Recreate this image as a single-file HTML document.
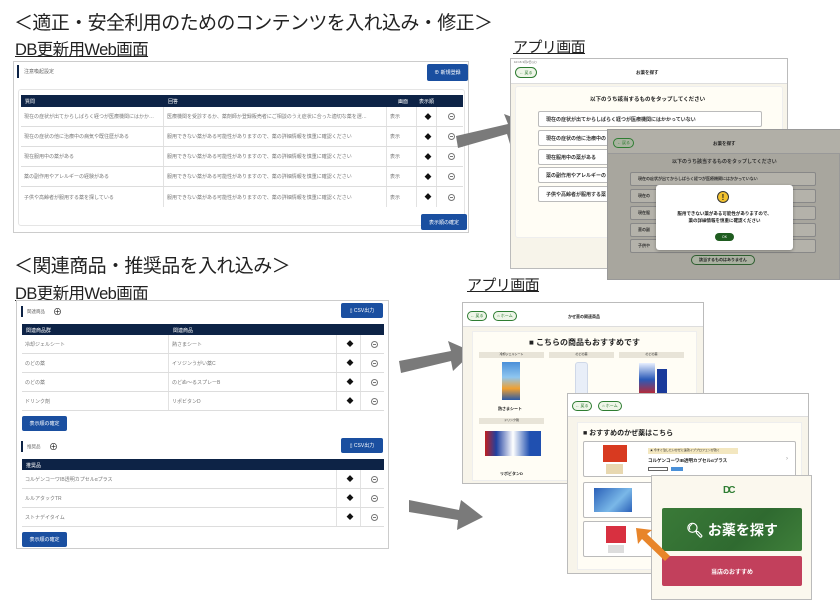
<!DOCTYPE html>
<html><head><meta charset="utf-8">
<style>
*{box-sizing:border-box;margin:0;padding:0}
body{width:840px;height:596px;background:#fff;position:relative;overflow:hidden;font-family:"Liberation Sans","Noto Sans CJK JP",sans-serif;color:#222}
.a{position:absolute}
.h1{font-size:19px;white-space:nowrap;letter-spacing:-0.6px}
.h2{font-size:16.5px;text-decoration:underline;white-space:nowrap;letter-spacing:-0.6px}
.panel{border:1px solid #ccc;background:#fff}
.btn{background:#1a4fa0;color:#fff;font-size:5px;border-radius:2px;display:flex;align-items:center;justify-content:center}
.thd{background:#0d2346;color:#fff;font-size:5px}
.row{border-bottom:1px solid #ddd;font-size:5px;color:#777}
.cell{position:absolute;top:0;height:100%;display:flex;align-items:center;padding-left:3px;border-right:1px solid #e2e2e2}
.sort{font-size:7px;color:#111}
.minus{width:7px;height:7px;border:1px solid #777;border-radius:50%;position:relative}
.minus:after{content:"";position:absolute;left:1px;right:1px;top:2px;height:1px;background:#777}
.app{background:#f7f4ea;border:1px solid #bbb}
.bar{background:#fff;border-bottom:1px solid #ddd}
.back{border:1px solid #2e7d32;border-radius:6px;background:#eef5e8;color:#2e7d32;font-size:4px;display:flex;align-items:center;justify-content:center}
.opt{background:#fff;border:1px solid #bbb;border-radius:2px;font-size:5px;font-weight:bold;color:#333;display:flex;align-items:center;padding-left:7px}
</style></head><body>

<div class="a h1" style="left:14px;top:8px">＜適正・安全利用のためのコンテンツを入れ込み・修正＞</div>
<div class="a h2" style="left:15px;top:36px">DB更新用Web画面</div>
<div class="a h2" style="left:513px;top:36px;font-size:15px">アプリ画面</div>

<!-- Panel 1 -->
<div class="a panel" style="left:13px;top:61px;width:456px;height:172px">
  <div class="a" style="left:3px;top:3px;width:2px;height:13px;background:#0d2346"></div>
  <div class="a" style="left:10px;top:6px;font-size:5px;color:#666">注意喚起設定</div>
  <div class="a btn" style="left:413px;top:2px;width:41px;height:17px">⊕ 新規登録</div>
  <div class="a" style="left:4px;top:27px;width:447px;height:137px;border:1px solid #e5e5e5;border-radius:3px"></div>
  <div class="a thd" style="left:7px;top:33px;width:442px;height:12px">
    <span class="a" style="left:4px;top:3px">質問</span><span class="a" style="left:147px;top:3px">回答</span>
    <span class="a" style="left:377px;top:3px">画面</span><span class="a" style="left:398px;top:3px">表示順</span>
  </div>
  <div class="a" style="left:7px;top:45px;width:442px">
    <div class="row a" style="top:0;left:0;width:442px;height:20px"><div class="cell" style="left:0;width:143px">現在の症状が出てからしばらく経つが医療機関にはかか…</div><div class="cell" style="left:143px;width:223px">医療機関を受診するか、薬剤師か登録販売者にご相談のうえ症状に合った適切な薬を選…</div><div class="cell" style="left:366px;width:30px">表示</div><div class="cell" style="left:396px;width:20px;justify-content:center"><span class="sort">◆</span></div><div class="cell" style="left:416px;width:26px;justify-content:center;border:0"><div class="minus"></div></div></div>
    <div class="row a" style="top:20px;left:0;width:442px;height:20px"><div class="cell" style="left:0;width:143px">現在の症状の他に治療中の病気や既往歴がある</div><div class="cell" style="left:143px;width:223px">服用できない薬がある可能性がありますので、薬の詳細情報を慎重に確認ください</div><div class="cell" style="left:366px;width:30px">表示</div><div class="cell" style="left:396px;width:20px;justify-content:center"><span class="sort">◆</span></div><div class="cell" style="left:416px;width:26px;justify-content:center;border:0"><div class="minus"></div></div></div>
    <div class="row a" style="top:40px;left:0;width:442px;height:20px"><div class="cell" style="left:0;width:143px">現在服用中の薬がある</div><div class="cell" style="left:143px;width:223px">服用できない薬がある可能性がありますので、薬の詳細情報を慎重に確認ください</div><div class="cell" style="left:366px;width:30px">表示</div><div class="cell" style="left:396px;width:20px;justify-content:center"><span class="sort">◆</span></div><div class="cell" style="left:416px;width:26px;justify-content:center;border:0"><div class="minus"></div></div></div>
    <div class="row a" style="top:60px;left:0;width:442px;height:20px"><div class="cell" style="left:0;width:143px">薬の副作用やアレルギーの経験がある</div><div class="cell" style="left:143px;width:223px">服用できない薬がある可能性がありますので、薬の詳細情報を慎重に確認ください</div><div class="cell" style="left:366px;width:30px">表示</div><div class="cell" style="left:396px;width:20px;justify-content:center"><span class="sort">◆</span></div><div class="cell" style="left:416px;width:26px;justify-content:center;border:0"><div class="minus"></div></div></div>
    <div class="row a" style="top:80px;left:0;width:442px;height:20px;border:0"><div class="cell" style="left:0;width:143px">子供や高齢者が服用する薬を探している</div><div class="cell" style="left:143px;width:223px">服用できない薬がある可能性がありますので、薬の詳細情報を慎重に確認ください</div><div class="cell" style="left:366px;width:30px">表示</div><div class="cell" style="left:396px;width:20px;justify-content:center"><span class="sort">◆</span></div><div class="cell" style="left:416px;width:26px;justify-content:center;border:0"><div class="minus"></div></div></div>
  </div>
  <div class="a btn" style="left:407px;top:152px;width:46px;height:16px">表示順の確定</div>
</div>

<!-- Arrow 1 -->
<svg class="a" style="left:452px;top:110px" width="85" height="45"><polygon points="4,26 56,14 52,4 78,14 58,34 55,24 6,38" fill="#7a7a7a"/></svg>

<!-- App 1 -->
<div class="a app" style="left:510px;top:58px;width:278px;height:211px">
  <div class="a bar" style="left:0;top:0;width:276px;height:25px">
    <div class="a" style="left:3px;top:1px;font-size:3px;color:#666">10:16 3月2日(火)</div>
    <div class="a back" style="left:4px;top:8px;width:22px;height:11px">← 戻る</div>
    <div class="a" style="left:125px;top:11px;font-size:4.5px;font-weight:bold">お薬を探す</div>
  </div>
  <div class="a" style="left:4px;top:27px;width:268px;height:152px;background:#fffdf5;border:1px solid #eee;border-radius:3px"></div>
  <div class="a" style="left:79px;top:36px;font-size:5.5px;font-weight:bold">以下のうち該当するものをタップしてください</div>
  <div class="a opt" style="left:27px;top:52px;width:224px;height:16px">現在の症状が出てからしばらく経つが医療機関にはかかっていない</div>
  <div class="a opt" style="left:27px;top:71px;width:224px;height:16px">現在の症状の他に治療中の</div>
  <div class="a opt" style="left:27px;top:90px;width:224px;height:16px">現在服用中の薬がある</div>
  <div class="a opt" style="left:27px;top:108px;width:224px;height:16px">薬の副作用やアレルギーの</div>
  <div class="a opt" style="left:27px;top:127px;width:224px;height:16px">子供や高齢者が服用する薬</div>
</div>

<!-- App 2 (dimmed) -->
<div class="a" style="left:607px;top:129px;width:233px;height:151px;background:#a8a69e;border:1px solid #999">
  <div class="a" style="left:0;top:0;width:233px;height:24px;background:#b1afa7;border-bottom:1px solid #999"></div>
  <div class="a back" style="left:5px;top:8px;width:21px;height:10px;background:#a9b3a0">← 戻る</div>
  <div class="a" style="left:105px;top:11px;font-size:4.5px;font-weight:bold">お薬を探す</div>
  <div class="a" style="left:64px;top:28px;font-size:5px;font-weight:bold;color:#333">以下のうち該当するものをタップしてください</div>
  <div class="a opt" style="left:22px;top:42px;width:186px;height:14px;background:#b4b2aa;border-color:#888;font-size:4px">現在の症状が出てからしばらく経つが医療機関にはかかっていない</div>
  <div class="a opt" style="left:22px;top:59px;width:186px;height:14px;background:#b4b2aa;border-color:#888;font-size:4px">現在の</div>
  <div class="a opt" style="left:22px;top:76px;width:186px;height:14px;background:#b4b2aa;border-color:#888;font-size:4px">現在服</div>
  <div class="a opt" style="left:22px;top:93px;width:186px;height:14px;background:#b4b2aa;border-color:#888;font-size:4px">薬の副</div>
  <div class="a opt" style="left:22px;top:109px;width:186px;height:14px;background:#b4b2aa;border-color:#888;font-size:4px">子供や</div>
  <div class="a" style="left:83px;top:125px;width:64px;height:10px;border:1px solid #2e5e30;border-radius:5px;font-size:4px;font-weight:bold;display:flex;align-items:center;justify-content:center;background:#aab1a1">該当するものはありません</div>
  <div class="a" style="left:48px;top:55px;width:137px;height:65px;background:#fff;border-radius:3px;box-shadow:0 1px 3px rgba(0,0,0,.3)">
    <div class="a" style="left:61px;top:6px;width:12px;height:12px;border-radius:50%;background:#f2c230;border:1px solid #333;font-size:8px;font-weight:bold;text-align:center;line-height:11px">!</div>
    <div class="a" style="left:0;top:25px;width:137px;text-align:center;font-size:4.5px;font-weight:bold;line-height:7px">服用できない薬がある可能性がありますので、<br>薬の詳細情報を慎重に確認ください</div>
    <div class="a" style="left:59px;top:48px;width:19px;height:8px;border-radius:4px;background:#1f5c20;color:#fff;font-size:3.5px;text-align:center;line-height:8px">OK</div>
  </div>
</div>

<div class="a h1" style="left:14px;top:251px">＜関連商品・推奨品を入れ込み＞</div>
<div class="a h2" style="left:15px;top:280px">DB更新用Web画面</div>
<div class="a h2" style="left:467px;top:274px;font-size:15px">アプリ画面</div>

<!-- Panel 2 -->
<div class="a panel" style="left:16px;top:300px;width:373px;height:249px">
  <div class="a" style="left:4px;top:5px;width:2px;height:11px;background:#0d2346"></div>
  <div class="a" style="left:10px;top:8px;font-size:4.5px;color:#666">関連商品</div>
  <div class="a" style="left:36px;top:7px;font-size:9px;line-height:9px">⊕</div>
  <div class="a btn" style="left:324px;top:2px;width:42px;height:15px">▯ CSV出力</div>
  <div class="a thd" style="left:5px;top:23px;width:362px;height:11px"><span class="a" style="left:4px;top:3px">関連商品群</span><span class="a" style="left:151px;top:3px">関連商品</span></div>
  <div class="a" style="left:5px;top:34px;width:362px">
    <div class="row a" style="top:0;width:362px;height:19px"><div class="cell" style="left:0;width:147px">冷却ジェルシート</div><div class="cell" style="left:147px;width:168px">熱さまシート</div><div class="cell" style="left:315px;width:24px;justify-content:center"><span class="sort">◆</span></div><div class="cell" style="left:339px;width:23px;justify-content:center;border:0"><div class="minus"></div></div></div>
    <div class="row a" style="top:19px;width:362px;height:19px"><div class="cell" style="left:0;width:147px">のどの薬</div><div class="cell" style="left:147px;width:168px">イソジンうがい薬C</div><div class="cell" style="left:315px;width:24px;justify-content:center"><span class="sort">◆</span></div><div class="cell" style="left:339px;width:23px;justify-content:center;border:0"><div class="minus"></div></div></div>
    <div class="row a" style="top:38px;width:362px;height:19px"><div class="cell" style="left:0;width:147px">のどの薬</div><div class="cell" style="left:147px;width:168px">のどぬ～るスプレーB</div><div class="cell" style="left:315px;width:24px;justify-content:center"><span class="sort">◆</span></div><div class="cell" style="left:339px;width:23px;justify-content:center;border:0"><div class="minus"></div></div></div>
    <div class="row a" style="top:57px;width:362px;height:19px"><div class="cell" style="left:0;width:147px">ドリンク剤</div><div class="cell" style="left:147px;width:168px">リポビタンD</div><div class="cell" style="left:315px;width:24px;justify-content:center"><span class="sort">◆</span></div><div class="cell" style="left:339px;width:23px;justify-content:center;border:0"><div class="minus"></div></div></div>
  </div>
  <div class="a btn" style="left:5px;top:115px;width:45px;height:15px">表示順の確定</div>
  <div class="a" style="left:4px;top:140px;width:2px;height:11px;background:#0d2346"></div>
  <div class="a" style="left:10px;top:143px;font-size:4.5px;color:#666">推奨品</div>
  <div class="a" style="left:32px;top:142px;font-size:9px;line-height:9px">⊕</div>
  <div class="a btn" style="left:324px;top:137px;width:42px;height:15px">▯ CSV出力</div>
  <div class="a thd" style="left:5px;top:158px;width:362px;height:11px"><span class="a" style="left:4px;top:3px">推奨品</span></div>
  <div class="a" style="left:5px;top:169px;width:362px">
    <div class="row a" style="top:0;width:362px;height:19px"><div class="cell" style="left:0;width:315px">コルゲンコーワIB透明カプセルαプラス</div><div class="cell" style="left:315px;width:24px;justify-content:center"><span class="sort">◆</span></div><div class="cell" style="left:339px;width:23px;justify-content:center;border:0"><div class="minus"></div></div></div>
    <div class="row a" style="top:19px;width:362px;height:19px"><div class="cell" style="left:0;width:315px">ルルアタックTR</div><div class="cell" style="left:315px;width:24px;justify-content:center"><span class="sort">◆</span></div><div class="cell" style="left:339px;width:23px;justify-content:center;border:0"><div class="minus"></div></div></div>
    <div class="row a" style="top:38px;width:362px;height:19px"><div class="cell" style="left:0;width:315px">ストナデイタイム</div><div class="cell" style="left:315px;width:24px;justify-content:center"><span class="sort">◆</span></div><div class="cell" style="left:339px;width:23px;justify-content:center;border:0"><div class="minus"></div></div></div>
  </div>
  <div class="a btn" style="left:5px;top:231px;width:45px;height:15px">表示順の確定</div>
</div>

<!-- Arrows 2,3 -->
<svg class="a" style="left:395px;top:335px" width="85" height="45"><polygon points="4,26 56,16 53,6 78,17 58,36 56,26 6,38" fill="#7a7a7a"/></svg>
<svg class="a" style="left:405px;top:490px" width="85" height="45"><polygon points="4,10 54,20 56,10 78,27 52,40 53,30 4,22" fill="#7a7a7a"/></svg>

<!-- App 3 -->
<div class="a app" style="left:462px;top:302px;width:242px;height:182px">
  <div class="a bar" style="left:0;top:0;width:240px;height:24px">
    <div class="a back" style="left:4px;top:8px;width:20px;height:10px">← 戻る</div>
    <div class="a back" style="left:30px;top:8px;width:24px;height:10px">⌂ ホーム</div>
    <div class="a" style="left:105px;top:11px;font-size:4px;font-weight:bold">かぜ薬の関連商品</div>
  </div>
  <div class="a" style="left:9px;top:28px;width:225px;height:150px;background:#fffdf5;border:1px solid #eee"></div>
  <div class="a" style="left:66px;top:34px;font-size:8px;font-weight:bold">■ こちらの商品もおすすめです</div>
  <div class="a" style="left:16px;top:49px;width:65px;height:6px;background:#e8e4d8;font-size:3px;text-align:center">冷却ジェルシート</div>
  <div class="a" style="left:86px;top:49px;width:65px;height:6px;background:#e8e4d8;font-size:3px;text-align:center">のどの薬</div>
  <div class="a" style="left:156px;top:49px;width:65px;height:6px;background:#e8e4d8;font-size:3px;text-align:center">のどの薬</div>
  <div class="a" style="left:39px;top:59px;width:18px;height:38px;background:linear-gradient(#4a8fd8,#8ec6f0 40%,#f0a030 70%,#2a5aa8)"></div>
  <div class="a" style="left:112px;top:59px;width:13px;height:38px;background:#e8eef8;border-radius:3px 3px 2px 2px;border:1px solid #cfd8e8"></div>
  <div class="a" style="left:176px;top:60px;width:16px;height:33px;background:linear-gradient(#e8f0ff,#2a5ab8 50%,#d02020)"></div>
  <div class="a" style="left:194px;top:66px;width:10px;height:26px;background:#1a3a9a"></div>
  <div class="a" style="left:35px;top:103px;font-size:4px;font-weight:bold">熱さまシート</div>
  <div class="a" style="left:16px;top:115px;width:65px;height:6px;background:#e8e4d8;font-size:3px;text-align:center">ドリンク剤</div>
  <div class="a" style="left:22px;top:128px;width:56px;height:25px;background:linear-gradient(90deg,#c02020,#2040a0 20%,#fff 50%,#2050b0 80%)"></div>
  <div class="a" style="left:37px;top:168px;font-size:4px;font-weight:bold">リポビタンD</div>
</div>

<!-- App 4 -->
<div class="a app" style="left:567px;top:393px;width:242px;height:181px">
  <div class="a bar" style="left:0;top:0;width:240px;height:23px">
    <div class="a back" style="left:4px;top:7px;width:20px;height:10px">← 戻る</div>
    <div class="a back" style="left:30px;top:7px;width:24px;height:10px">⌂ ホーム</div>
  </div>
  <div class="a" style="left:9px;top:28px;width:225px;height:148px;background:#fffdf5;border:1px solid #eee"></div>
  <div class="a" style="left:15px;top:34px;font-size:7px;font-weight:bold">■ おすすめのかぜ薬はこちら</div>
  <div class="a" style="left:15px;top:47px;width:213px;height:36px;background:#fff;border:1px solid #bbb;border-radius:2px">
    <div class="a" style="left:19px;top:3px;width:24px;height:17px;background:#d83a20"></div>
    <div class="a" style="left:22px;top:22px;width:17px;height:10px;background:#e8d8b0"></div>
    <div class="a" style="left:64px;top:6px;width:90px;height:6px;background:#f3e7c0;font-size:3px;padding-left:2px">★ 今すぐ治したいかぜに速効イブプロフェンが効く</div>
    <div class="a" style="left:64px;top:16px;font-size:4.5px;font-weight:bold">コルゲンコーワIB透明カプセルαプラス</div>
    <div class="a" style="left:64px;top:25px;width:20px;height:4px;border:1px solid #666"></div>
    <div class="a" style="left:87px;top:25px;width:12px;height:4px;background:#4a90d8"></div>
    <div class="a" style="left:202px;top:14px;font-size:6px;color:#999">›</div>
  </div>
  <div class="a" style="left:15px;top:88px;width:213px;height:36px;background:#fff;border:1px solid #bbb;border-radius:2px">
    <div class="a" style="left:10px;top:5px;width:38px;height:24px;background:linear-gradient(135deg,#2a60b8,#7ab8e8 60%,#2a60b8)"></div>
  </div>
  <div class="a" style="left:15px;top:127px;width:213px;height:36px;background:#fff;border:1px solid #bbb;border-radius:2px">
    <div class="a" style="left:22px;top:4px;width:20px;height:17px;background:#d83040"></div>
    <div class="a" style="left:24px;top:23px;width:16px;height:8px;background:#ddd"></div>
  </div>
</div>

<!-- App 5 -->
<div class="a app" style="left:651px;top:475px;width:161px;height:125px;background:#fbf8ee">
  <div class="a" style="left:71px;top:9px;font-size:10px;font-weight:bold;color:#2e7d32;letter-spacing:-2px">DC</div>
  <div class="a" style="left:10px;top:32px;width:140px;height:43px;background:linear-gradient(135deg,#3a7a38,#2f6a30 60%,#3f7f3a);border-radius:2px;color:#fff;font-size:14px;font-weight:bold;display:flex;align-items:center;justify-content:center">🔍︎ お薬を探す</div>
  <div class="a" style="left:10px;top:80px;width:140px;height:30px;background:#c2405c;border-radius:2px;color:#fff;font-size:6px;font-weight:bold;display:flex;align-items:center;justify-content:center">当店のおすすめ</div>
</div>
<svg class="a" style="left:630px;top:522px" width="45" height="45"><polygon points="6,6 22,8 17,12 40,34 35,39 12,17 8,22" fill="#e8852a"/></svg>

</body></html>
